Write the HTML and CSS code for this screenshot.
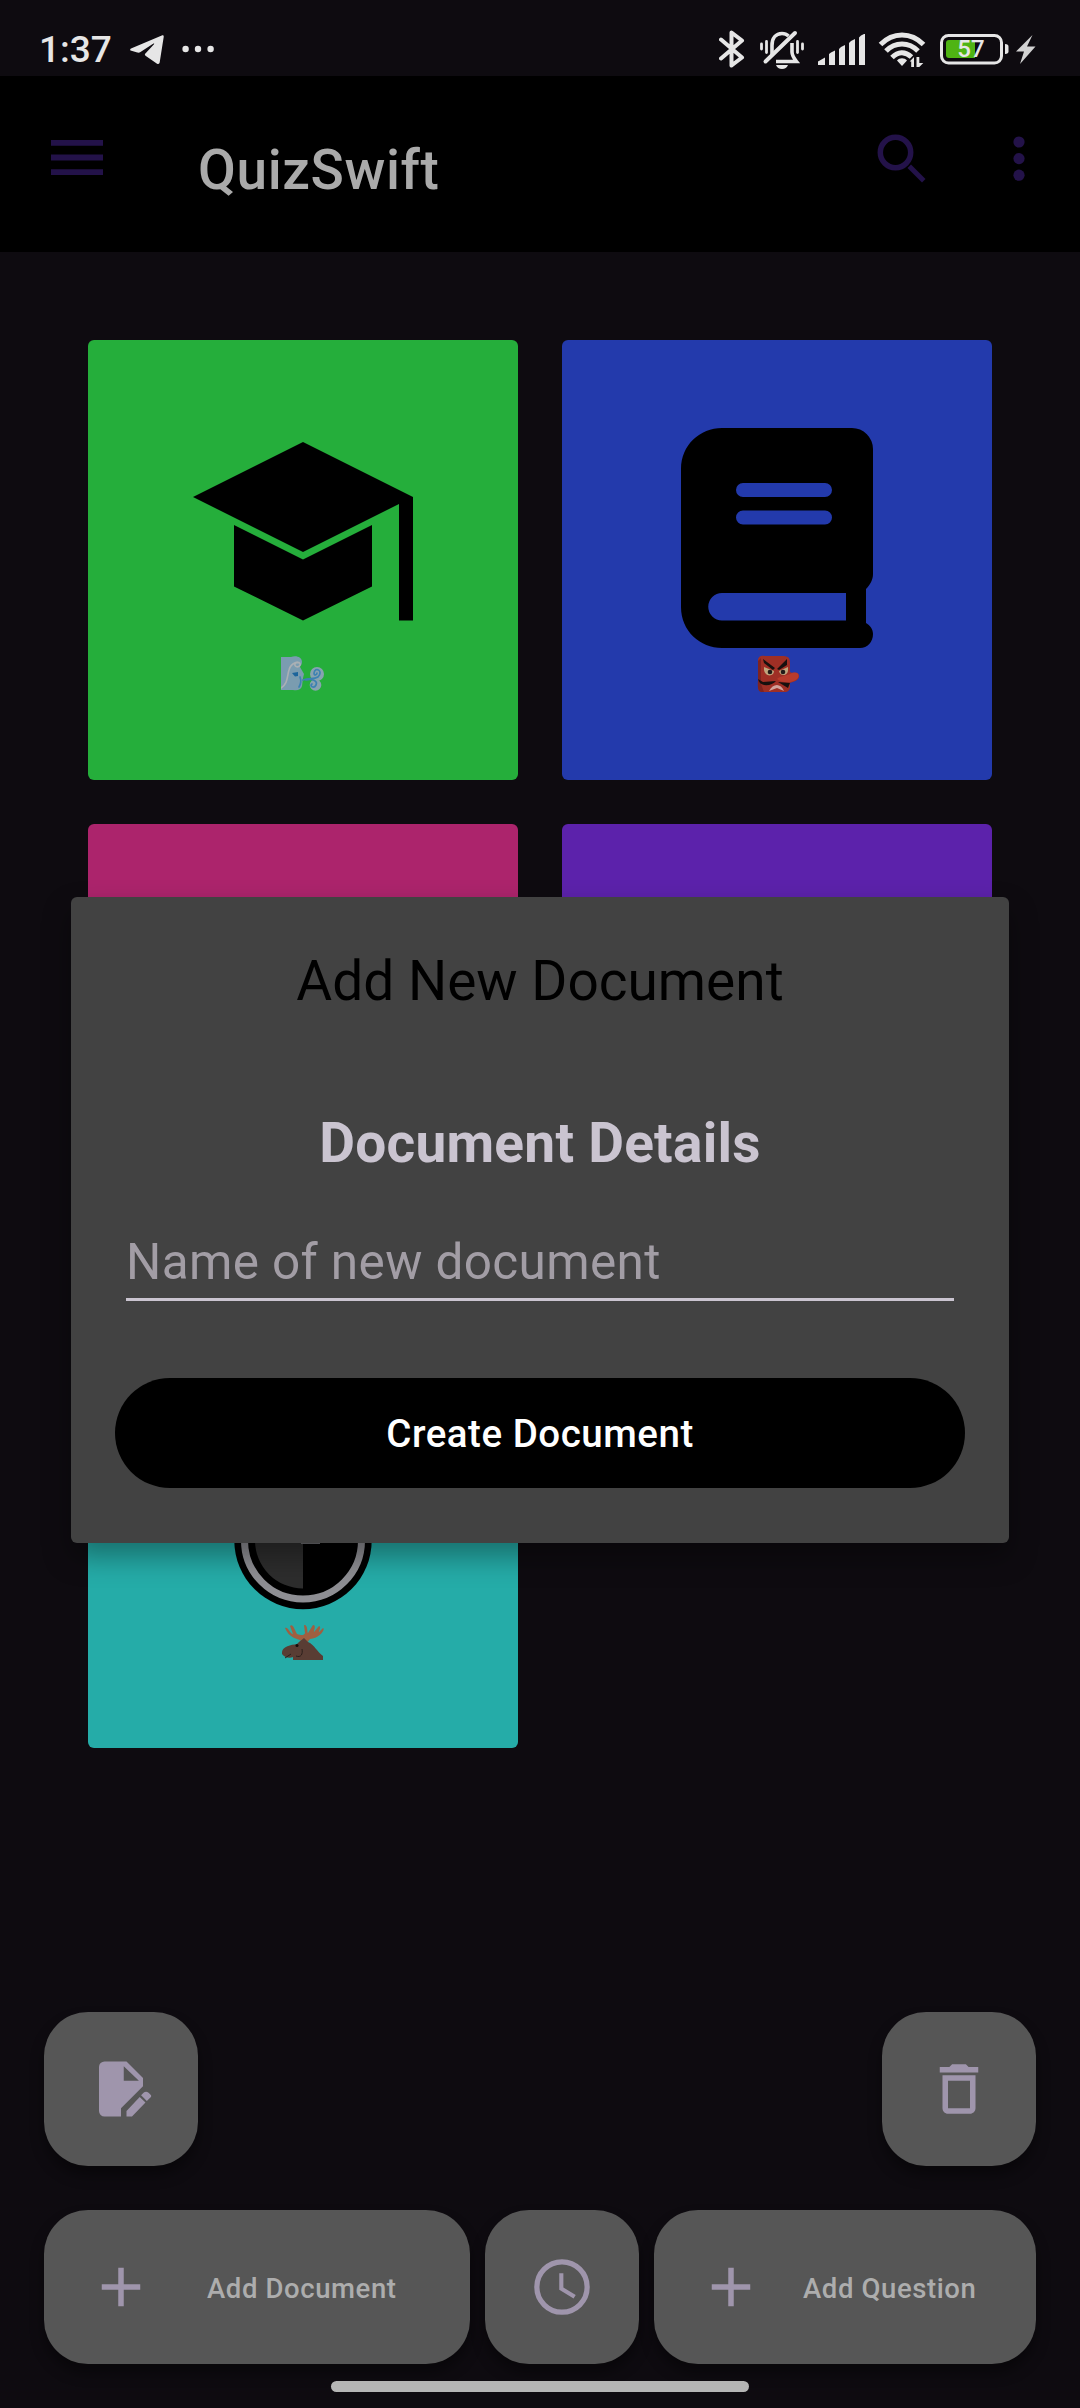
FILE: index.html
```html
<!DOCTYPE html>
<html lang="en">
<head>
<meta charset="utf-8">
<title>QuizSwift</title>
<link rel="stylesheet" href="styles.css">
</head>
<body>
<div class="screen">
  <header class="status">
    <div class="status-left">
      <span class="clock">1:37</span>
      <svg class="telegram" width="34" height="30" viewBox="0 0 34 30"><path d="M1 13.6 31.8.4c1.3-.5 2.1.2 1.9 1.5l-4 25.4c-.3 1.8-1.5 2.1-3 1.1l-11.2-7.7c-.9-.7-.8-1.5-.1-2.3L24 9.2c.5-.7-.2-1-.9-.5L10.5 17c-1 .7-2 .8-3.200.5L1.400 15.800C-.2 15.300-.2 14.200 1 13.600z"/></svg>
      <svg class="more-dots" width="32" height="8" viewBox="0 0 32 8"><circle cx="3.600" cy="4" r="3.200"/><circle cx="16" cy="4" r="3.200"/><circle cx="28.600" cy="4" r="3.200"/></svg>
    </div>
    <div class="status-right">
      <svg class="stroked" width="26" height="40" viewBox="0 0 26 40"><path d="M2 10.500 23 28.500 12.500 36.500V3.500L23 11.500 2 29.500" stroke-width="4" stroke-linejoin="round" stroke-linecap="round"/></svg>
      <svg class="bell" width="46" height="40" viewBox="0 0 46 40"><g fill="none" stroke="#e6e6e6"><path d="M13 25V15.500c0-7.500 4-12 10-12 3 0 5 1 6.500 2.500M33 13v9c0 3 1 5 4.500 9.500H17" stroke-width="3.600"/><path d="M6.500 31.500 36 3" stroke-width="4" stroke-linecap="round"/><path d="M2.500 14v5M7.500 11.500v11M38.500 11.500v11M43.500 14v5" stroke-width="2.800" stroke-linecap="round"/></g><path d="M17 35h12c-1 2.500-3 4-6 4s-5-1.500-6-4z"/></svg>
      <svg class="signal" width="48" height="32" viewBox="0 0 48 32"><path d="M0 31v-3.500L7 23.500V31zM11 31V20l2-1.500 4-2V31zM21 31V15l2-2 4-2v20zM31 31V9l2-2 4-2v26zM41 31V3.500l2-2 4-2V31z"/></svg>
      <svg class="wifi" width="48" height="36" viewBox="0 0 48 36"><g fill="none" stroke="#e6e6e6" stroke-width="5"><path d="M2.500 12.500C15-.2 33-.2 45.500 12.500"/><path d="M8 19c9-9.500 23-9.500 32 0"/><path d="M14 25.500c6-6 13-6.500 19.500-.5"/></g><path d="m24 34-5-5.500c2.500-3 7.500-3 10 0zM36 25v10h-2.800v-5.500h-1.500zM38.500 25v10h2.800l4-4h-4V25z"/></svg>
      <div class="battery"><svg width="70" height="31" viewBox="0 0 70 31"><rect x="1.500" y="1.500" width="60" height="27.500" rx="7" fill="none" stroke="#e6e6e6" stroke-width="3"/><path fill="#4fb413" d="M9 6h19.500v18H9a3 3 0 0 1-3-3V9a3 3 0 0 1 3-3z"/><path fill="#4fb413" d="M28 6h7v18h-7z"/><path d="M65 10c2.500 0 3.500 1 3.500 2.500v5c0 1.500-1 2.500-3.500 2.500z"/></svg><span class="level">57</span></div>
      <svg class="bolt" width="20" height="29" viewBox="0 0 20 29"><path d="M16.500 0 0 16.500h8L4 29l15.500-17.500H11z"/></svg>
    </div>
  </header>

  <nav class="appbar">
    <svg class="menu" width="52" height="35" viewBox="0 0 52 35"><path d="M0 0h52v5.800H0zM0 14.600h52v5.800H0zM0 29.200h52V35H0z"/></svg>
    <h1>QuizSwift</h1>
    <svg class="search" width="50" height="50" viewBox="0 0 50 50"><circle cx="18.500" cy="18.500" r="15.200" fill="none" stroke="#231249" stroke-width="5.500"/><path d="m30.500 34 3.500-3.500L48.500 45 45 48.500z"/></svg>
    <svg class="kebab" width="12" height="46" viewBox="0 0 12 46"><circle cx="6" cy="6" r="5.600"/><circle cx="6" cy="22.600" r="5.600"/><circle cx="6" cy="39.200" r="5.600"/></svg>
  </nav>

  <main class="grid">
    <section class="card green">
      <svg width="220" height="220" viewBox="0 0 220 220"><path d="M110 14 220 69v123.500h-14V76l-96 48L0 69zM41 97l69 34.500L179 97v61.500l-69 34-69-34z"/></svg>
      <svg class="emoji" width="44" height="36" viewBox="0 0 44 36"><path fill="#7a9cb0" d="M0 1h10c5-2 11 0 11 5 0 3-2 4-2 5l4 7-1 4-1 8c-1 4-5 5-9 4H0z"/><g fill="#87a3b0"><circle cx="36" cy="18" r="7"/><circle cx="34.500" cy="29" r="5.800"/></g><g fill="none" stroke-linecap="round"><path stroke="#aab0b4" stroke-width="1.600" d="M0 32c7-4 6-12 8-18 2-8 12-10 11-5-1 3-6 2-5-1 1-2 3-2 3-1"/><path stroke="#3c82b2" stroke-width="1.700" d="M22 24c6-3 10 0 15-3 6-6-3-11-4-4 0 3 3 2 3 0M25 24c6-2 12 1 10 5s-7 1-4-1M19 21q2 5-1 10"/></g><path fill="#1c659b" d="m11 17 6-1v4l-3 .5z"/></svg>
    </section>
    <section class="card blue">
      <svg width="220" height="220" viewBox="0 0 220 220"><path fill-rule="evenodd" d="M55 0h130a21 21 0 0 1 21 21v125c0 6-3 11-7 15v34c4 2.500 7 6 7 11 0 8-5.500 14-13 14H55c-22 0-41-17-41-41V41C14 17 33 0 55 0zM55 165a13.700 13.700 0 0 0 0 27.500h124V165zM76 55a7 7 0 0 0 0 14h82a7 7 0 0 0 0-14zM76 82.500a7 7 0 0 0 0 14h82a7 7 0 0 0 0-14z"/></svg>
      <svg class="emoji mask" width="42" height="37" viewBox="0 0 42 37"><path fill="#9f2f25" d="M1 6c0-7 6-5 10-5h13c7 0 9 1 9 7v9c4 2 7-1 9 3 1 5-5 7-9 8v5c-1 4-4 4-5 4H5c-5 0-4-7-4-12z"/><path fill="#7f2320" d="M1 6 4 3v26l3 8H4c-4-1-3-8-3-12z"/><path fill="#b83b2c" d="M20 24c3-3 8-3 13-5 6-3 10-1 8 4-5 6-17 5-21 1z"/><g fill="#17100e"><path d="m6 4 12 9-2 2L7 8zM30 4 20 14l2 1 8-5zM1 24l5 3 13-1c-4 5-16 7-18-2zM21 27l12 1-2 5z"/></g><g fill="#bfa67d"><path d="m7 12 10 4c0 6-9 6-10-1z"/><path d="m31 12-9 4c1 6 9 5 9-1z"/></g><g fill="#211a18"><circle cx="13" cy="17" r="2.300"/><circle cx="26" cy="17" r="2.300"/></g><path fill="#d0a39b" d="M12 36c4-8 12-8 15 0l-7-3z"/></svg>
    </section>
    <section class="card pink"></section>
    <section class="card purple"></section>
    <section class="card teal">
      <svg width="220" height="220" viewBox="0 0 220 220"><circle cx="110" cy="144.500" r="68.700"/><circle cx="110" cy="144.500" r="58.500" fill="none" stroke="#8e8e93" stroke-width="7"/><path fill="#2d2d2d" d="M110 96.500a48 48 0 0 0 0 96z"/><path fill="#6a6a6e" d="M108 140h19v8h-19z"/></svg>
      <svg class="emoji moose" width="43" height="36" viewBox="0 0 43 36"><path fill="#9f5f41" d="M3 4c3-2 5 6 8 6L8 2c3-3 5 5 7 8 4 2 8 1 8-1l-1-8c4-1 3 8 4 8l5-8c4 0 0 7 1 7l5-6c3 1-1 6 0 6l4-4c3 1-4 11-13 11l-4 5h-4c1-7-11-2-17-16z"/><path fill="#593d34" d="m17 18 5-4 4 4c7 3 9 10 15 14v4H11v-3c-4 2-9 0-11-3-1-7 8-9 15-10z"/><g fill="none" stroke="#2b1f1b"><path d="M20 25c1 5-1 9-6 7M3 34l6-4"/></g><circle cx="15" cy="21.500" r="1.500" fill="#140d0b"/></svg>
    </section>
  </main>

  <footer class="actions">
    <div class="row spread">
      <button class="fab square" aria-label="Edit"><svg viewBox="0 0 24 24"><path d="M6 2a2 2 0 0 0-2 2v16a2 2 0 0 0 2 2h6v-3L20 11V8l-6-6H6m7 1.700L18.500 9H13V3.700M21.100 13a1.300 1.300 0 0 0-.8.300l-1 1 2.100 2.100 1-1c.8-.8.800-1 0-1.700l-.5-.4a1.300 1.300 0 0 0-.8-.3m-2.300 1.900L14 20v2h2l4.900-5.100z"/></svg></button>
      <button class="fab square" aria-label="Delete"><svg viewBox="0 0 24 24"><path fill-rule="evenodd" d="M15.500 4 14.500 3h-5l-1 1H5v2h14V4zM6 7v12c0 1.100.9 2 2 2h8c1.100 0 2-.9 2-2V7zm2 2h8v10H8z"/></svg></button>
    </div>
    <div class="row">
      <button class="fab add-doc"><svg viewBox="0 0 24 24"><path d="M19 13h-6v6h-2v-6H5v-2h6V5h2v6h6z"/></svg><span>Add Document</span></button>
      <button class="fab square" aria-label="History"><svg viewBox="0 0 24 24"><circle cx="12" cy="12" r="9.150" fill="none" stroke="#9f95ac" stroke-width="1.900"/><path d="M12.500 7H11v6l5.200 3.200.8-1.300-4.500-2.700z"/></svg></button>
      <button class="fab add-question"><svg viewBox="0 0 24 24"><path d="M19 13h-6v6h-2v-6H5v-2h6V5h2v6h6z"/></svg><span>Add Question</span></button>
    </div>
  </footer>
  <div class="home"></div>

  <div class="dialog" role="dialog">
    <h2>Add New Document</h2>
    <h3>Document Details</h3>
    <input type="text" placeholder="Name of new document">
    <button class="create">Create Document</button>
  </div>
</div>
</body>
</html>
```
FILE: styles.css
```css
* { box-sizing: border-box; margin: 0; padding: 0; }
body { background: #0e0b10; font-family: Roboto, "Liberation Sans", sans-serif; }
svg { display: block; flex: none; }
button, input { border: 0; font-family: inherit; }
.screen { position: relative; width: 1080px; height: 2408px; overflow: hidden; display: flex; flex-direction: column; }

.status { flex: none; height: 76px; display: flex; justify-content: space-between; color: #e6e6e6; fill: #e6e6e6; }
.status-left { display: flex; padding-left: 39px; }
.clock { width: 91px; padding-top: 27px; font-size: 37px; font-weight: 500; line-height: 46px; }
.telegram { margin-top: 35px; }
.more-dots { margin: 45px 0 0 18px; }
.status-right { display: flex; align-items: flex-start; padding-right: 44px; }
.stroked { fill: none; stroke: #e6e6e6; margin: 29px 14px 0 0; }
.bell { margin: 30px 13px 0 0; }
.signal { margin: 34px 12px 0 0; }
.wifi { margin: 32px 14px 0 0; }
.battery { position: relative; width: 70px; margin: 34px 6px 0 0; }
.level { position: absolute; left: 0; top: 0; width: 62px; text-align: center; font-size: 24px; font-weight: 500; line-height: 31px; }
.bolt { margin-top: 35px; fill: #d2d2d2; }

.appbar { flex: none; height: 176px; background: #000; display: flex; align-items: flex-start; padding-left: 51px; fill: #231249; }
.menu { margin-top: 64px; }
.appbar h1 { flex: 1; margin: 61px 0 0 95px; font-size: 55px; font-weight: 500; line-height: 66px; letter-spacing: .6px; color: #aaa; }
.search { margin: 58px 86px 0 0; }
.kebab { margin: 60px 55px 0 0; }

.grid { flex: none; display: grid; grid-template-columns: 430px 430px; grid-auto-rows: 440px; gap: 44px; padding: 88px 88px 0; }
.card { border-radius: 6px; padding-top: 88px; display: flex; flex-direction: column; align-items: center; }
.green { background: #25ae3b; }
.blue { background: #233aac; }
.pink { background: #ac246c; }
.purple { background: #5c22ab; }
.teal { background: #25aca8; }
.emoji { margin-top: 8px; }
.mask { margin-left: 2px; margin-top: 7px; }

.actions { margin-top: 264px; padding: 0 44px; display: flex; flex-direction: column; gap: 44px; }
.row { display: flex; gap: 15px; }
.spread { justify-content: space-between; }
.fab { height: 154px; border-radius: 44px; background: #565656; padding: 0 44px; display: flex; align-items: center; box-shadow: 0 9px 14px rgba(0, 0, 0, .4); color: #adadad; fill: #9f95ac; font-size: 27.5px; font-weight: 500; letter-spacing: .6px; }
.fab svg { width: 66px; height: 66px; }
.square { width: 154px; }
.add-doc { width: 426px; }
.add-doc span { margin-left: 53px; }
.add-question { width: 382px; }
.add-question span { margin-left: 39px; }
.fab span { white-space: nowrap; padding-top: 2px; }
.home { width: 418px; height: 11px; border-radius: 6px; background: #b5b5b5; margin: 17px auto 0; }

.dialog { position: absolute; left: 71px; top: 897px; width: 938px; height: 646px; padding: 51px 44px 0; border-radius: 6px; background: #424242; box-shadow: 0 14px 28px rgba(0, 0, 0, .35); text-align: center; }
.dialog h2 { font-size: 55px; font-weight: 400; line-height: 66px; color: #000; }
.dialog h3 { margin-top: 96px; font-size: 55px; font-weight: 700; line-height: 66px; letter-spacing: .25px; color: #cac4d0; }
.dialog input { display: block; width: 828px; height: 77px; margin: 48px auto 0; padding-top: 2px; background: none; border-bottom: 3px solid #cac4d0; font-size: 49.5px; letter-spacing: .37px; color: #cac4d0; }
.dialog input::placeholder { color: #a29da5; opacity: 1; }
.create { display: block; width: 850px; height: 110px; margin-top: 77px; border-radius: 55px; background: #000; color: #fff; font-size: 38.5px; font-weight: 500; letter-spacing: .52px; }
```
